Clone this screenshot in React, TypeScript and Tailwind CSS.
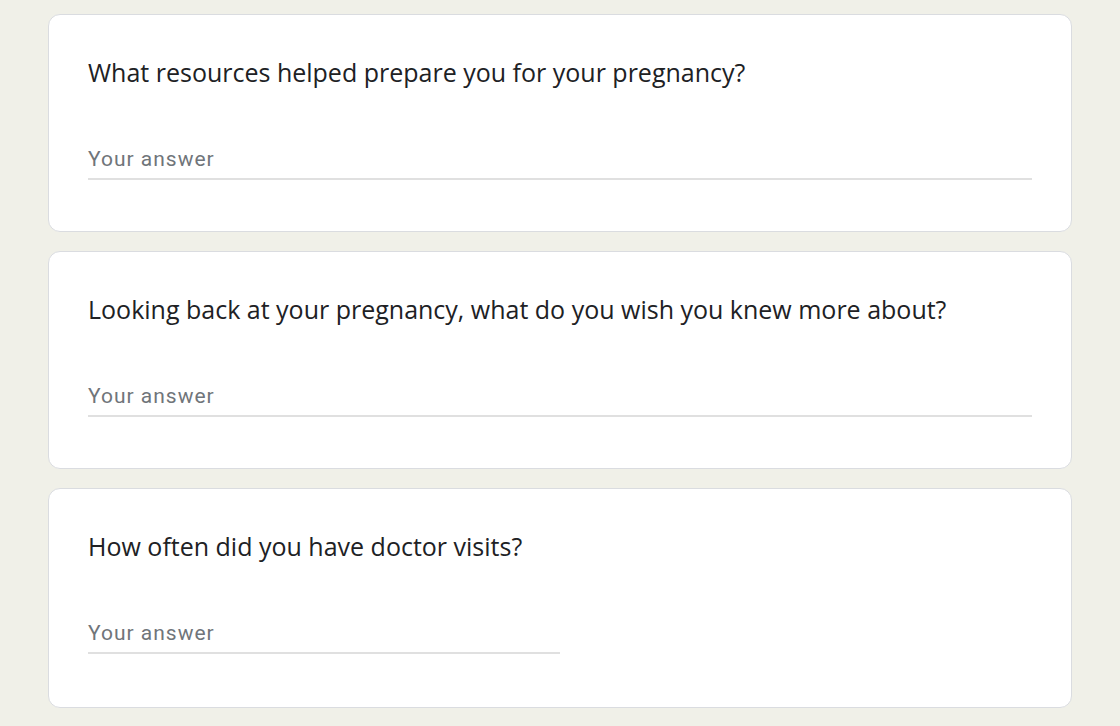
const questions = [
  { title: 'What resources helped prepare you for your pregnancy?', wide: true, h: 'h-[218px]' },
  { title: 'Looking back at your pregnancy, what do you wish you knew more about?', wide: true, h: 'h-[218px]' },
  { title: 'How often did you have doctor visits?', wide: false, h: 'h-[220px]' },
];

export default function App() {
  return (
    <div className="min-h-[726px] bg-[#f0f0e8] pt-[14px] pl-[48px]">
      <div className="flex w-[1024px] flex-col gap-[19px]">
        {questions.map((q) => (
          <div
            key={q.title}
            className={`${q.h} rounded-[12px] border border-[#dadce0] bg-white px-[39px] pt-[39px]`}
          >
            <div className="text-[25px] leading-[36px] text-[#202124] [font-family:'Open_Sans',sans-serif]">
              {q.title}
            </div>
            <div className={`mt-[54px] border-b-2 border-[#e0e0e0] ${q.wide ? 'w-full' : 'w-[472px]'}`}>
              <div className="pb-[4px] text-[21px] leading-[30px] tracking-[1px] text-[#70757a] [font-family:Roboto,sans-serif]">
                Your answer
              </div>
            </div>
          </div>
        ))}
      </div>
    </div>
  );
}
